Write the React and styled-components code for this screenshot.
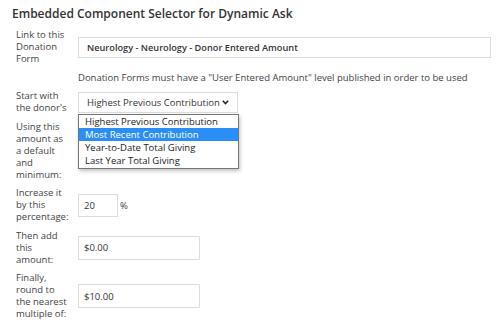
import React from 'react';
import styled, { createGlobalStyle } from 'styled-components';

const GlobalStyle = createGlobalStyle`
body {
  margin: 0;
  background: #fff;
  font-family: "Open Sans", "Liberation Sans", sans-serif;
}
`

const Page = styled.div`
width: 500px;
height: 322px;
overflow: hidden;
`

const Title = styled.h2`
margin: 5px 0 0 12px;
font-size: 12px;
line-height: 18px;
font-weight: 600;
color: #333;
`

const Form = styled.div`
display: grid;
grid-template-columns: 54px 1fr;
column-gap: 8px;
row-gap: 6.5px;
margin-top: 6px;
padding-left: 16px;
align-items: center;
`

const Label = styled.div`
font-size: 9.5px;
line-height: 12px;
color: #444;
`

const Field = styled.div`
display: flex;
align-items: center;
position: relative;
`

const Note = styled.div`
font-size: 9.5px;
line-height: 12px;
color: #444;
white-space: nowrap;
`

const TextBox = styled.div`
box-sizing: border-box;
width: ${p => p.width}px;
height: ${p => p.height || 21}px;
border: 1px solid #dcdcdc;
background: #fff;
display: flex;
align-items: center;
padding-left: ${p => p.pad || 5}px;
font-size: ${p => (p.bold ? 9.2 : 9.5)}px;
font-weight: ${p => (p.bold ? 600 : 400)};
color: #333;
`

const Unit = styled.span`
margin-left: 2px;
font-size: 9.5px;
color: #444;
`

const SelectBox = styled.div`
box-sizing: border-box;
width: 160px;
height: 21px;
border: 1px solid #dcdcdc;
background: #fff;
display: flex;
align-items: center;
justify-content: space-between;
padding: 0 8px 0 8px;
font-size: 9.5px;
color: #333;
`

const DropList = styled.ul`
position: absolute;
top: 22px;
left: 0;
z-index: 2;
box-sizing: border-box;
width: 161px;
margin: 0;
padding: 0;
list-style: none;
border: 1px solid #767676;
background: #fff;
box-shadow: 1px 2px 4px rgba(0, 0, 0, 0.25);
`

const Option = styled.li`
height: 13.25px;
line-height: 13.25px;
padding-left: 6px;
font-size: 9.5px;
color: ${p => (p.active ? '#fff' : '#222')};
background: ${p => (p.active ? '#2b8ef5' : 'transparent')};
white-space: nowrap;
`

const Chevron = () => (
  <svg width="7" height="5" viewBox="0 0 7 5">
    <polyline points="0.8,0.8 3.5,3.6 6.2,0.8" fill="none" stroke="#222" strokeWidth="1.5" />
  </svg>
)

const options = [
  'Highest Previous Contribution',
  'Most Recent Contribution',
  'Year-to-Date Total Giving',
  'Last Year Total Giving',
]

export default function App() {
  return (
    <Page>
      <GlobalStyle />
      <Title>Embedded Component Selector for Dynamic Ask</Title>
      <Form>
        <Label>Link to this Donation Form</Label>
        <Field>
          <TextBox width={413} pad={8} bold>Neurology - Neurology - Donor Entered Amount</TextBox>
        </Field>

        <span />
        <Note>Donation Forms must have a "User Entered Amount" level published in order to be used</Note>

        <Label>Start with the donor's</Label>
        <Field>
          <SelectBox>
            <span>Highest Previous Contribution</span>
            <Chevron />
          </SelectBox>
          <DropList>
            {options.map((o, i) => (
              <Option key={o} active={i === 1}>{o}</Option>
            ))}
          </DropList>
        </Field>

        <Label>Using this amount as a default and minimum:</Label>
        <span />

        <Label>Increase it by this percentage:</Label>
        <Field>
          <TextBox width={40} height={23}>20</TextBox>
          <Unit>%</Unit>
        </Field>

        <Label>Then add this amount:</Label>
        <Field>
          <TextBox width={122} height={24}>$0.00</TextBox>
        </Field>

        <Label>Finally, round to the nearest multiple of:</Label>
        <Field>
          <TextBox width={122} height={24}>$10.00</TextBox>
        </Field>
      </Form>
    </Page>
  );
}
